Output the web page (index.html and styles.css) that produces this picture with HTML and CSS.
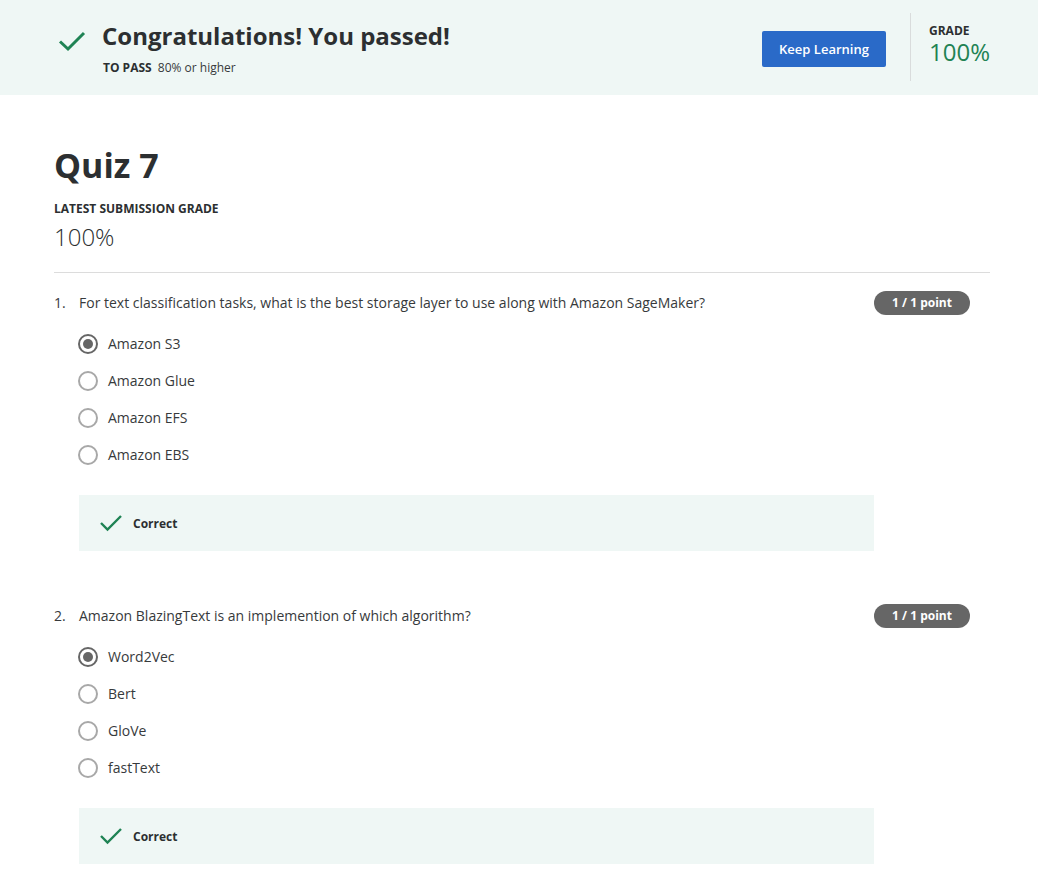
FILE: index.html
```html
<!DOCTYPE html>
<html lang="en">
<head>
<meta charset="utf-8">
<title>Quiz 7</title>
<link rel="stylesheet" href="styles.css">
</head>
<body>
<header class="banner">
  <div class="banner-left">
    <svg class="banner-check" width="28" height="22" viewBox="0 0 28 22"><path d="M2 11.5 L10 19 L26 3" fill="none" stroke="#1f8354" stroke-width="3"/></svg>
    <div class="banner-text">
      <h2 class="banner-title">Congratulations! You passed!</h2>
      <div class="banner-sub"><span class="label">TO PASS</span> 80% or higher</div>
    </div>
  </div>
  <div class="banner-right">
    <button class="btn-primary">Keep Learning</button>
    <div class="grade-box">
      <div class="label">GRADE</div>
      <div class="grade-value">100%</div>
    </div>
  </div>
</header>

<main class="content">
  <h1 class="quiz-title">Quiz 7</h1>
  <div class="label">LATEST SUBMISSION GRADE</div>
  <div class="latest-grade">100%</div>
  <hr class="divider">

  <section class="question">
    <div class="q-head">
      <span class="q-num">1.</span>
      <span class="q-text">For text classification tasks, what is the best storage layer to use along with Amazon SageMaker?</span>
      <span class="pill">1 / 1 point</span>
    </div>
    <ul class="options">
      <li><span class="radio checked"></span>Amazon S3</li>
      <li><span class="radio"></span>Amazon Glue</li>
      <li><span class="radio"></span>Amazon EFS</li>
      <li><span class="radio"></span>Amazon EBS</li>
    </ul>
    <div class="feedback">
      <svg width="24" height="18" viewBox="0 0 24 18"><path d="M2 9 L8.5 15.5 L22 2" fill="none" stroke="#1f8354" stroke-width="2.4"/></svg>
      <span>Correct</span>
    </div>
  </section>

  <section class="question">
    <div class="q-head">
      <span class="q-num">2.</span>
      <span class="q-text">Amazon BlazingText is an implemention of which algorithm?</span>
      <span class="pill">1 / 1 point</span>
    </div>
    <ul class="options">
      <li><span class="radio checked"></span>Word2Vec</li>
      <li><span class="radio"></span>Bert</li>
      <li><span class="radio"></span>GloVe</li>
      <li><span class="radio"></span>fastText</li>
    </ul>
    <div class="feedback">
      <svg width="24" height="18" viewBox="0 0 24 18"><path d="M2 9 L8.5 15.5 L22 2" fill="none" stroke="#1f8354" stroke-width="2.4"/></svg>
      <span>Correct</span>
    </div>
  </section>
</main>
</body>
</html>
```

FILE: styles.css
```css
* { box-sizing: border-box; }
html, body { margin: 0; padding: 0; background: #fff; }
body {
  font-family: "Open Sans", "Liberation Sans", sans-serif;
  color: #373a3c;
  font-size: 14px;
}

.banner {
  background: #eff7f5;
  height: 95px;
  display: flex;
  justify-content: space-between;
  align-items: flex-start;
  padding: 13px 48px 0 58px;
}
.banner-left { display: flex; align-items: flex-start; padding-top: 13px; }
.banner-check { margin-top: 4px; margin-right: 16px; }
.banner-title {
  margin: 0;
  font-size: 24px;
  font-weight: 700;
  line-height: 20px;
  color: #2c2f31;
}
.banner-sub { margin-top: 14px; font-size: 12px; line-height: 16px; padding-left: 1px; }
.label { font-size: 12px; font-weight: 700; color: #2c2f31; line-height: 16px; }
.banner-sub .label { margin-right: 3px; }

.banner-right { display: flex; align-items: flex-start; }
.btn-primary {
  margin-top: 18px;
  width: 124px;
  height: 36px;
  background: #2a6ac8;
  color: #fff;
  border: 0;
  border-radius: 2px;
  font-family: "Open Sans", "Liberation Sans", sans-serif;
  font-size: 13px;
  font-weight: 600;
}
.grade-box {
  margin-left: 24px;
  border-left: 1px solid #d9dcdc;
  height: 68px;
  padding: 10px 0 0 18px;
}
.grade-value { color: #1f8354; font-size: 24px; line-height: 24px; margin-top: 1px; }

.content { padding: 0 48px 0 54px; }
.quiz-title {
  margin: 0;
  padding-top: 50px;
  font-size: 34px;
  font-weight: 700;
  line-height: 40px;
  color: #2c2f31;
}
.content > .label { margin-top: 16px; }
.latest-grade { font-size: 24px; font-weight: 300; line-height: 30px; margin-top: 5px; color: #2c2f31; }
.divider { border: 0; border-top: 1px solid #dcdcdc; margin: 20px 0 18px; }

.question { margin-bottom: 53px; }
.q-head { display: flex; align-items: flex-start; }
.q-num { width: 25px; line-height: 24px; }
.q-text { flex: 1; line-height: 24px; }
.pill {
  margin-right: 20px;
  width: 96px;
  height: 24px;
  border-radius: 12px;
  background: #666;
  color: #fff;
  font-size: 12px;
  font-weight: 700;
  text-align: center;
  line-height: 24px;
}
.options { list-style: none; margin: 10px 0 0 24px; padding: 0; }
.options li {
  display: flex;
  align-items: center;
  height: 37px;
  line-height: 20px;
}
.radio {
  width: 20px;
  height: 20px;
  border-radius: 50%;
  border: 2px solid #a8a8a8;
  margin-right: 10px;
  flex: none;
  position: relative;
}
.radio.checked { border: 2px solid #666; }
.radio.checked::after {
  content: "";
  position: absolute;
  left: 3px; top: 3px;
  width: 10px; height: 10px;
  border-radius: 50%;
  background: #666;
}
.feedback {
  margin: 22px 116px 0 25px;
  height: 56px;
  background: #eff7f5;
  display: flex;
  align-items: center;
  padding-left: 20px;
  font-size: 12px;
  font-weight: 700;
  color: #2c2f31;
}
.feedback svg { margin-right: 10px; }
```
